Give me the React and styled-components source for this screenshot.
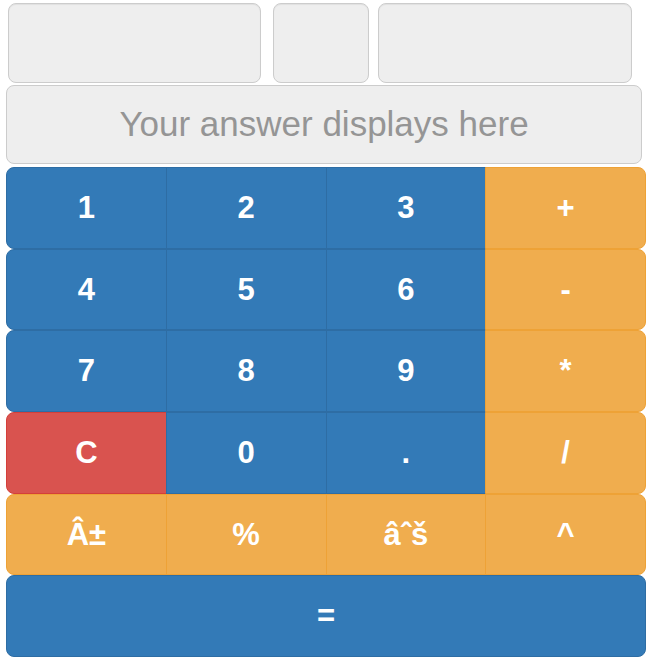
import React from "react";
import styled, { createGlobalStyle } from "styled-components";

const Global = createGlobalStyle`
  html, body { margin: 0; padding: 0; background: #fff; }
  body { font-family: "Liberation Sans", Arial, Helvetica, sans-serif; }
  * { box-sizing: border-box; }
`;

const Calc = styled.div`
  width: 640px;
  margin: 3px 0 0 6px;
  display: flex;
  flex-direction: column;
`;

const TopRow = styled.div`
  display: flex;
  padding-left: 2px;
  height: 80px;
`;

const Field = styled.div`
  width: ${(p) => p.$w}px;
  margin-left: ${(p) => p.$gap}px;
  height: 80px;
  background: #eeeeee;
  border: 1.5px solid #cccccc;
  border-radius: 8px;
  box-shadow: inset 0 1px 1px rgba(0, 0, 0, 0.06);
`;

const Display = styled.div`
  margin-top: 2px;
  width: 636px;
  height: 79px;
  background: #eeeeee;
  border: 1.5px solid #cccccc;
  border-radius: 8px;
  display: flex;
  align-items: center;
  justify-content: center;
  font-size: 35px;
  color: #959595;
  padding-bottom: 1px;
`;

const Keypad = styled.div`
  margin-top: 3px;
  display: flex;
  flex-direction: column;
`;

const Row = styled.div`
  display: flex;
  height: 81.7px;
`;

const palette = {
  blue: { bg: "#337ab7", border: "#2e6da4" },
  orange: { bg: "#f0ad4e", border: "#eea236" },
  red: { bg: "#d9534f", border: "#d43f3a" },
};

const Key = styled.button`
  flex: 1 1 0;
  height: 100%;
  margin: 0;
  margin-left: -1px;
  background: ${(p) => palette[p.$tone].bg};
  border: 1.5px solid ${(p) => palette[p.$tone].border};
  color: #fff;
  font-family: "Liberation Sans", Arial, Helvetica, sans-serif;
  font-weight: bold;
  font-size: 31px;
  border-radius: 0;
  padding: 0;
  display: flex;
  align-items: center;
  justify-content: center;
  &:first-child {
    margin-left: 0;
    border-top-left-radius: 8px;
    border-bottom-left-radius: 8px;
  }
  &:last-child {
    border-top-right-radius: 8px;
    border-bottom-right-radius: 8px;
  }
`;

const rows = [
  [["1", "blue"], ["2", "blue"], ["3", "blue"], ["+", "orange"]],
  [["4", "blue"], ["5", "blue"], ["6", "blue"], ["-", "orange"]],
  [["7", "blue"], ["8", "blue"], ["9", "blue"], ["*", "orange"]],
  [["C", "red"], ["0", "blue"], [".", "blue"], ["/", "orange"]],
  [["Â±", "orange"], ["%", "orange"], ["âˆš", "orange"], ["^", "orange"]],
  [["=", "blue"]],
];

export default function App() {
  return (
    <>
      <Global />
      <Calc>
        <TopRow>
          <Field $w={253} $gap={0} />
          <Field $w={96} $gap={12} />
          <Field $w={254} $gap={9} />
        </TopRow>
        <Display>Your answer displays here</Display>
        <Keypad>
          {rows.map((r, i) => (
            <Row key={i}>
              {r.map(([label, tone]) => (
                <Key key={label} $tone={tone}>
                  {label}
                </Key>
              ))}
            </Row>
          ))}
        </Keypad>
      </Calc>
    </>
  );
}
